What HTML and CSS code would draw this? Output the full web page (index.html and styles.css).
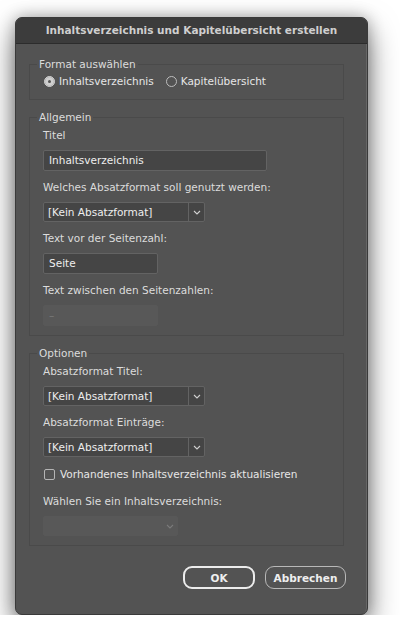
FILE: index.html
```html
<!DOCTYPE html>
<html lang="de">
<head>
    <meta charset="UTF-8">
    <title>Inhaltsverzeichnis und Kapitelübersicht erstellen</title>
    <link rel="stylesheet" href="styles.css">
</head>
<body>
    <div class="dialog">
        <div class="titlebar">Inhaltsverzeichnis und Kapitelübersicht erstellen</div>

        <div class="content">
            <fieldset class="group">
                <legend>Format auswählen</legend>
                <div class="group-body radios">
                    <label class="radio"><span class="dot checked"></span>Inhaltsverzeichnis</label>
                    <label class="radio"><span class="dot"></span>Kapitelübersicht</label>
                </div>
            </fieldset>

            <fieldset class="group">
                <legend>Allgemein</legend>
                <div class="group-body">
                    <div class="label">Titel</div>
                    <div class="input wide">Inhaltsverzeichnis</div>

                    <div class="label">Welches Absatzformat soll genutzt werden:</div>
                    <div class="select">
                        <span class="value">[Kein Absatzformat]</span>
                        <span class="arrow"><svg width="8" height="5" viewBox="0 0 8 5"><path d="M1 1l3 3 3-3" fill="none" stroke="#d0d0d0" stroke-width="1.1"/></svg></span>
                    </div>

                    <div class="label">Text vor der Seitenzahl:</div>
                    <div class="input short">Seite</div>

                    <div class="label">Text zwischen den Seitenzahlen:</div>
                    <div class="input short disabled">–</div>
                </div>
            </fieldset>

            <fieldset class="group">
                <legend>Optionen</legend>
                <div class="group-body">
                    <div class="label">Absatzformat Titel:</div>
                    <div class="select">
                        <span class="value">[Kein Absatzformat]</span>
                        <span class="arrow"><svg width="8" height="5" viewBox="0 0 8 5"><path d="M1 1l3 3 3-3" fill="none" stroke="#d0d0d0" stroke-width="1.1"/></svg></span>
                    </div>

                    <div class="label">Absatzformat Einträge:</div>
                    <div class="select">
                        <span class="value">[Kein Absatzformat]</span>
                        <span class="arrow"><svg width="8" height="5" viewBox="0 0 8 5"><path d="M1 1l3 3 3-3" fill="none" stroke="#d0d0d0" stroke-width="1.1"/></svg></span>
                    </div>

                    <label class="checkbox"><span class="box"></span>Vorhandenes Inhaltsverzeichnis aktualisieren</label>

                    <div class="label">Wählen Sie ein Inhaltsverzeichnis:</div>
                    <div class="select disabled">
                        <span class="value"></span>
                        <span class="arrow"><svg width="8" height="5" viewBox="0 0 8 5"><path d="M1 1l3 3 3-3" fill="none" stroke="#7a7a7a" stroke-width="1.1"/></svg></span>
                    </div>
                </div>
            </fieldset>

            <div class="buttons">
                <button class="btn primary">OK</button>
                <button class="btn">Abbrechen</button>
            </div>
        </div>
    </div>
</body>
</html>
```

FILE: styles.css
```css
* {
    margin: 0;
    padding: 0;
    box-sizing: border-box;
}

body {
    background: #fff;
    font-family: "DejaVu Sans", sans-serif;
    font-size: 10.5px;
    color: #dcdcdc;
}

.dialog {
    width: 353px;
    height: 598px;
    margin: 17px 0 0 15px;
    background: #535353;
    border: 1px solid #3a3a3a;
    border-radius: 7px;
    overflow: hidden;
    box-shadow: 0 14px 30px rgba(0, 0, 0, 0.5), 0 0 16px rgba(0, 0, 0, 0.3), inset -3px 0 0 -2px #666;
}

.titlebar {
    height: 26px;
    line-height: 25px;
    background: #3c3c3c;
    border-bottom: 1px solid #2c2c2c;
    text-align: center;
    font-weight: bold;
    color: #cfcfcf;
}

.content {
    padding: 13px 0 0 13px;
}

/* group boxes */
.group {
    width: 315px;
    border: 1px solid #4a4a4a;
    margin-bottom: 10px;
    min-width: 0;
}

.group legend {
    margin-left: 7px;
    padding: 0 2px;
    line-height: 14px;
    color: #dcdcdc;
}

.group-body {
    padding: 4px 10px 9px 13px;
}

.group-body > :last-child {
    margin-bottom: 0;
}

.radios {
    display: flex;
    gap: 12px;
    padding: 2px 10px 10px 14px;
}

.radio,
.checkbox {
    display: flex;
    align-items: center;
    height: 16px;
    color: #e6e6e6;
}

.dot {
    width: 11px;
    height: 11px;
    border-radius: 50%;
    border: 1px solid #bdbdbd;
    margin-right: 4px;
}

.dot.checked {
    background: #cfcfcf;
    border-color: #cfcfcf;
    box-shadow: inset 0 0 0 3px #cfcfcf, inset 0 0 0 6px #555;
}

.label {
    line-height: 14px;
    margin-bottom: 8px;
}

/* text fields and dropdowns */
.input {
    height: 21px;
    line-height: 19px;
    padding: 0 5px;
    background: #454545;
    border: 1px solid #636363;
    border-radius: 2px;
    margin-bottom: 9px;
    color: #eee;
}

.input.wide {
    width: 224px;
}

.input.short {
    width: 115px;
}

.input.disabled {
    background: #585858;
    border-color: #585858;
    color: #7a7a7a;
}

.select {
    display: flex;
    width: 162px;
    height: 20px;
    background: #454545;
    border: 1px solid #636363;
    border-radius: 2px;
    margin-bottom: 9px;
}

.select .value {
    flex: 1;
    line-height: 18px;
    padding-left: 4px;
    color: #eee;
    border-right: 1px solid #636363;
}

.select .arrow {
    width: 15px;
    display: flex;
    align-items: center;
    justify-content: center;
}

.select.disabled {
    width: 135px;
    background: #585858;
    border-color: #585858;
}

.select.disabled .value {
    border-right: none;
}

.checkbox {
    margin: 0 0 12px 1px;
}

.box {
    width: 11px;
    height: 11px;
    border: 1px solid #b5b5b5;
    border-radius: 2px;
    margin-right: 5px;
}

/* footer buttons */
.buttons {
    display: flex;
    justify-content: flex-end;
    gap: 10px;
    width: 317px;
    margin-top: 20px;
}

.btn {
    height: 23px;
    border-radius: 9px;
    background: transparent;
    font-family: "DejaVu Sans", sans-serif;
    font-size: 10.5px;
    font-weight: bold;
    color: #eee;
    border: 1px solid #b8b8b8;
    width: 81px;
}

.btn.primary {
    width: 72px;
    border: 2px solid #ececec;
}
```
